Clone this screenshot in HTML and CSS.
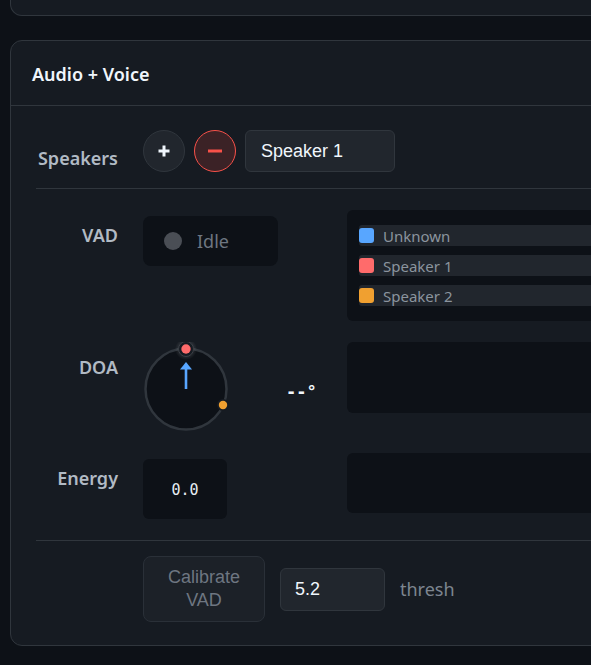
FILE: index.html
```html
<!DOCTYPE html>
<html lang="en">
<head>
<meta charset="utf-8">
<title>Audio + Voice</title>
<link rel="stylesheet" href="styles.css">
</head>
<body>
<div class="page">
  <div class="top-card"></div>
  <section class="card">
    <header class="card-head"><h2 class="title">Audio + Voice</h2></header>
    <div class="card-body">
      <div class="speakers">
        <span class="lbl lbl-spk">Speakers</span>
        <button class="circ add" type="button" aria-label="Add speaker">
          <svg width="14" height="14" viewBox="0 0 14 14"><path d="M7 1.5v11M1.5 7h11" stroke="#f0f6fc" stroke-width="3" stroke-linecap="butt"/></svg>
        </button>
        <button class="circ remove" type="button" aria-label="Remove speaker">
          <svg width="16" height="6" viewBox="0 0 16 6"><path d="M1 3h14" stroke="#f85149" stroke-width="3"/></svg>
        </button>
        <input class="spk-input" type="text" value="Speaker 1">
      </div>

      <div class="grid">
        <div class="lbl">VAD</div>
        <div class="w">
          <div class="vad"><span class="vad-dot"></span><span class="vad-text">Idle</span></div>
        </div>
        <div class="panel legend">
          <div class="leg-row"><span class="sw sw-blue"></span><span>Unknown</span></div>
          <div class="leg-row"><span class="sw sw-red"></span><span>Speaker 1</span></div>
          <div class="leg-row"><span class="sw sw-orange"></span><span>Speaker 2</span></div>
        </div>

        <div class="lbl">DOA</div>
        <div class="w doa">
          <svg class="dial" width="86" height="90" viewBox="0 0 86 90">
            <defs>
              <radialGradient id="glow" cx="50%" cy="50%" r="50%">
                <stop offset="0%" stop-color="#ffffff" stop-opacity="0.25"/>
                <stop offset="60%" stop-color="#ffffff" stop-opacity="0.12"/>
                <stop offset="100%" stop-color="#ffffff" stop-opacity="0"/>
              </radialGradient>
            </defs>
            <circle cx="42" cy="47" r="40.5" fill="#0d1117" stroke="#30363d" stroke-width="2.5"/>
            <path d="M42 47V26" stroke="#58a6ff" stroke-width="2.6"/>
            <path d="M42 20L36 27.5H48Z" fill="#58a6ff"/>
            <circle cx="42" cy="7" r="11" fill="url(#glow)"/>
            <circle cx="42" cy="7" r="7.5" fill="#161b22" stroke="#3a3f46" stroke-width="1"/>
            <circle cx="42" cy="7" r="4.7" fill="#ff6b6b"/>
            <circle cx="79" cy="63" r="6" fill="#161b22"/>
            <circle cx="79" cy="63" r="4.2" fill="#f0a030"/>
          </svg>
          <span class="deg">--°</span>
        </div>
        <div class="panel doa-panel"></div>

        <div class="lbl">Energy</div>
        <div class="w">
          <div class="energy">0.0</div>
        </div>
        <div class="panel energy-panel"></div>
      </div>

      <div class="calib">
        <button class="cal-btn" type="button" disabled>Calibrate<br>VAD</button>
        <input class="thr" type="text" value="5.2">
        <span class="thresh">thresh</span>
      </div>
    </div>
  </section>
</div>
</body>
</html>
```

FILE: styles.css
```css
html, body {
  margin: 0;
  padding: 0;
  background: #0d1117;
  overflow: hidden;
}

.page {
  width: 900px;
  padding-left: 10px;
  font-family: "Noto Sans", "Open Sans", sans-serif;
}

.top-card {
  height: 15px;
  background: #161b22;
  border: 1px solid #30363d;
  border-top: none;
  border-radius: 0 0 12px 12px;
}

.card {
  margin-top: 24px;
  background: #161b22;
  border: 1px solid #30363d;
  border-radius: 12px;
}

.card-head {
  height: 64px;
  padding: 0 21px;
  display: flex;
  align-items: center;
  border-bottom: 1px solid #30363d;
}

.title {
  margin: 0;
  padding-top: 2px;
  font-size: 18px;
  font-weight: 600;
  color: #f0f6fc;
}

.card-body {
  padding: 24px 25px 23px;
}

.lbl {
  width: 82px;
  text-align: right;
  font-size: 18px;
  font-weight: 600;
  color: #b1bac4;
  line-height: 24px;
  padding-top: 13px;
}

.speakers {
  display: flex;
  align-items: flex-start;
  padding-bottom: 16px;
  border-bottom: 1px solid #30363d;
}

.lbl-spk {
  padding-top: 16px;
  margin-right: 25px;
}

.circ {
  width: 42px;
  height: 42px;
  border-radius: 50%;
  padding: 0;
  display: flex;
  align-items: center;
  justify-content: center;
  margin-right: 9px;
  cursor: pointer;
}

.add {
  background: #21262d;
  border: 1px solid #30363d;
}

.remove {
  background: #3b2226;
  border: 1px solid #f85149;
}

.spk-input {
  width: 150px;
  height: 42px;
  box-sizing: border-box;
  background: #21262d;
  border: 1px solid #30363d;
  border-radius: 6px;
  padding: 0 15px;
  font-family: "Liberation Sans", Arial, sans-serif;
  font-size: 18px;
  color: #f0f6fc;
  outline: none;
}

.grid {
  display: grid;
  grid-template-columns: 82px 179px 1fr;
  column-gap: 25px;
  row-gap: 21px;
  padding: 21px 0;
  border-bottom: 1px solid #30363d;
  align-items: start;
}

.grid .lbl {
  width: auto;
}

.w {
  padding-top: 6px;
}

.vad {
  width: 135px;
  height: 50px;
  box-sizing: border-box;
  background: #0d1117;
  border-radius: 8px;
  display: flex;
  align-items: center;
  padding-left: 21px;
  gap: 15px;
}

.vad-dot {
  width: 18px;
  height: 18px;
  border-radius: 50%;
  background: #4a4e55;
}

.vad-text {
  font-size: 18px;
  color: #6e7681;
}

.panel {
  background: #0d1117;
  border-radius: 6px;
}

.legend {
  padding: 15px 0 15px 12px;
  display: flex;
  flex-direction: column;
  gap: 9px;
}

.leg-row {
  height: 21px;
  background: #21262d;
  border-radius: 3px;
  display: flex;
  align-items: center;
  gap: 9px;
  font-size: 15px;
  color: #8b949e;
}

.sw {
  width: 15px;
  height: 15px;
  border-radius: 3px;
}

.sw-blue { background: #58a6ff; }
.sw-red { background: #ff6b6b; }
.sw-orange { background: #f0a030; }

.doa {
  padding-top: 0;
  display: flex;
  align-items: center;
}

.dial {
  display: block;
  margin-left: 1px;
}

.deg {
  margin-left: 56px;
  margin-top: 10px;
  font-family: "DejaVu Sans Mono", monospace;
  font-size: 17px;
  font-weight: 700;
  color: #f0f6fc;
}

.doa-panel {
  height: 71px;
}

.energy {
  width: 84px;
  height: 60px;
  padding-top: 2px;
  box-sizing: border-box;
  background: #0d1117;
  border-radius: 6px;
  display: flex;
  align-items: center;
  justify-content: center;
  font-family: "DejaVu Sans Mono", monospace;
  font-size: 15px;
  color: #e6edf3;
}

.energy-panel {
  height: 60px;
}

.calib {
  display: flex;
  align-items: center;
  padding-top: 15px;
  padding-left: 107px;
  gap: 15px;
}

.cal-btn {
  width: 122px;
  height: 66px;
  background: #1c2128;
  border: 1px solid #2a3038;
  border-radius: 8px;
  font-family: "Liberation Sans", Arial, sans-serif;
  font-size: 18px;
  line-height: 23px;
  color: #6e7681;
  padding: 0;
}

.thr {
  width: 105px;
  height: 43px;
  box-sizing: border-box;
  background: #21262d;
  border: 1px solid #30363d;
  border-radius: 6px;
  padding: 0 14px;
  font-family: "Liberation Sans", Arial, sans-serif;
  font-size: 18px;
  color: #f0f6fc;
  outline: none;
}

.thresh {
  font-size: 18px;
  color: #7d8590;
}
```
